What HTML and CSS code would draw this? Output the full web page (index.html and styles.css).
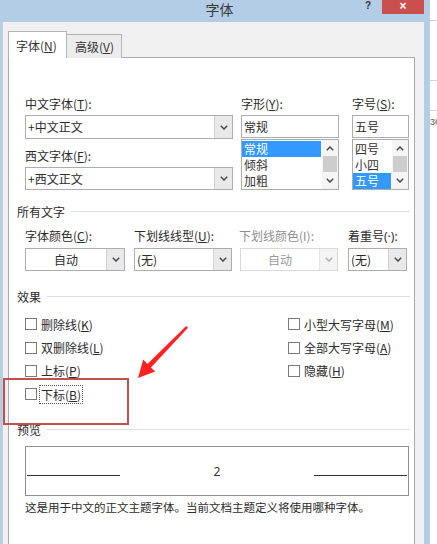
FILE: index.html
```html
<!DOCTYPE html>
<html lang="zh-CN">
<head>
<meta charset="utf-8">
<title>字体</title>
<link rel="stylesheet" href="styles.css">
</head>
<body>
<div class="screen">
  <div class="window">
    <div class="titlebar">
      <span class="title">字体</span>
      <span class="help">?</span>
      <span class="close">×</span>
    </div>
    <div class="client">
      <div class="tabs">
        <div class="tab active">字体(<u>N</u>)</div>
        <div class="tab">高级(<u>V</u>)</div>
      </div>
      <div class="panel">
        <div class="fonts">
          <div class="col col-main">
            <div class="lbl">中文字体(<u>T</u>):</div>
            <div class="combo tall"><span class="val">+中文正文</span><span class="btn"><svg width="8" height="5" viewBox="0 0 8 5"><polyline points="0.8,0.8 4,4 7.2,0.8" /></svg></span></div>
            <div class="lbl second">西文字体(<u>F</u>):</div>
            <div class="combo"><span class="val">+西文正文</span><span class="btn"><svg width="8" height="5" viewBox="0 0 8 5"><polyline points="0.8,0.8 4,4 7.2,0.8" /></svg></span></div>
          </div>
          <div class="col col-style">
            <div class="lbl">字形(<u>Y</u>):</div>
            <div class="edit">常规</div>
            <div class="listbox">
              <div class="items">
                <div class="item sel">常规</div>
                <div class="item">倾斜</div>
                <div class="item">加粗</div>
              </div>
              <div class="sb">
                <span class="sb-btn"><svg width="8" height="5" viewBox="0 0 8 5"><polyline points="0.8,4.2 4,1 7.2,4.2" /></svg></span>
                <span class="sb-thumb"></span>
                <span class="sb-btn"><svg width="8" height="5" viewBox="0 0 8 5"><polyline points="0.8,0.8 4,4 7.2,0.8" /></svg></span>
              </div>
            </div>
          </div>
          <div class="col col-size">
            <div class="lbl">字号(<u>S</u>):</div>
            <div class="edit">五号</div>
            <div class="listbox">
              <div class="items">
                <div class="item">四号</div>
                <div class="item">小四</div>
                <div class="item sel">五号</div>
              </div>
              <div class="sb">
                <span class="sb-btn"><svg width="8" height="5" viewBox="0 0 8 5"><polyline points="0.8,4.2 4,1 7.2,4.2" /></svg></span>
                <span class="sb-thumb"></span>
                <span class="sb-btn"><svg width="8" height="5" viewBox="0 0 8 5"><polyline points="0.8,0.8 4,4 7.2,0.8" /></svg></span>
              </div>
            </div>
          </div>
        </div>

        <div class="group g-all"><span>所有文字</span><i></i></div>

        <div class="attrs">
          <div class="field f-color">
            <div class="lbl">字体颜色(<u>C</u>):</div>
            <div class="combo"><span class="val center">自动</span><span class="btn"><svg width="8" height="5" viewBox="0 0 8 5"><polyline points="0.8,0.8 4,4 7.2,0.8" /></svg></span></div>
          </div>
          <div class="field f-line">
            <div class="lbl">下划线线型(<u>U</u>):</div>
            <div class="combo"><span class="val">(无)</span><span class="btn"><svg width="8" height="5" viewBox="0 0 8 5"><polyline points="0.8,0.8 4,4 7.2,0.8" /></svg></span></div>
          </div>
          <div class="field f-lcolor disabled">
            <div class="lbl">下划线颜色(I):</div>
            <div class="combo"><span class="val center">自动</span><span class="btn"><svg width="8" height="5" viewBox="0 0 8 5"><polyline points="0.8,0.8 4,4 7.2,0.8" /></svg></span></div>
          </div>
          <div class="field f-emph">
            <div class="lbl">着重号<span class="latin">(·):</span></div>
            <div class="combo"><span class="val">(无)</span><span class="btn"><svg width="8" height="5" viewBox="0 0 8 5"><polyline points="0.8,0.8 4,4 7.2,0.8" /></svg></span></div>
          </div>
        </div>

        <div class="group g-fx"><span>效果</span><i></i></div>

        <div class="effects">
          <div class="fx-col fx-left">
            <div class="chk"><span class="box"></span><span>删除线(<u>K</u>)</span></div>
            <div class="chk"><span class="box"></span><span>双删除线(<u>L</u>)</span></div>
            <div class="chk"><span class="box"></span><span>上标(<u>P</u>)</span></div>
            <div class="chk last"><span class="box"></span><span class="focus">下标(<u>B</u>)</span></div>
          </div>
          <div class="fx-col fx-right">
            <div class="chk"><span class="box"></span><span>小型大写字母(<u>M</u>)</span></div>
            <div class="chk"><span class="box"></span><span>全部大写字母(<u>A</u>)</span></div>
            <div class="chk"><span class="box"></span><span>隐藏(<u>H</u>)</span></div>
          </div>
        </div>

        <div class="group g-pv"><span>预览</span><i></i></div>

        <div class="preview">
          <span class="pline"></span>
          <span class="sample">2</span>
          <span class="pline"></span>
        </div>
        <div class="note">这是用于中文的正文主题字体。当前文档主题定义将使用哪种字体。</div>
      </div>
    </div>
  </div>
  <div class="behind">
    <i class="bl b1"></i>
    <i class="bl b2"></i>
    <i class="bl b3"></i>
    <span class="bnum">36</span>
  </div>
</div>

<div class="annot-box"></div>
<svg class="annot-arrow" width="437" height="544" viewBox="0 0 437 544">
  <polygon points="138,378 143.2,359.6 147.4,364 186.2,326 188,327.8 151,367.4 155.2,371.4" />
</svg>
</body>
</html>
```

FILE: styles.css
```css
* { box-sizing: border-box; }

html, body {
  margin: 0;
  padding: 0;
  width: 437px;
  height: 544px;
  overflow: hidden;
  background: #ffffff;
}

body {
  position: relative;
  font-family: "Noto Sans CJK SC", "Microsoft YaHei", "Noto Sans", sans-serif;
  font-size: 12px;
  color: #2b2b2b;
}

u { text-decoration: underline; text-underline-offset: 1px; }

.latin { font-family: "Noto Sans", "Liberation Sans", sans-serif; }

.screen {
  display: flex;
  width: 437px;
  height: 544px;
}

/* ---------- window frame ---------- */
.window {
  width: 430px;
  height: 544px;
  background: #b3cde7;
  display: flex;
  flex-direction: column;
  padding: 0 6px 0 2px;
}

.titlebar {
  height: 22px;
  flex: none;
  display: flex;
  align-items: flex-start;
  margin-right: -6px;
}

.title {
  flex: 1;
  text-align: center;
  padding-left: 72px;
  font-size: 14px;
  line-height: 19px;
  color: #3a3a3a;
}

.help {
  width: 10px;
  font-family: "Liberation Sans", Arial, sans-serif;
  font-weight: bold;
  font-size: 10px;
  line-height: 11px;
  color: #333;
  margin-right: 7px;
}

.close {
  width: 42px;
  height: 14px;
  margin-right: 6px;
  background: #c9504f;
  color: #fff;
  font-family: "Liberation Sans", Arial, sans-serif;
  font-weight: bold;
  font-size: 12px;
  line-height: 13px;
  text-align: center;
}

.client {
  flex: 1;
  background: #f0f0f0;
  border-left: 1px solid #c9cfd6;
  padding: 9px 9px 0 5px;
  display: flex;
  flex-direction: column;
  min-height: 0;
}

/* ---------- tabs ---------- */
.tabs {
  display: flex;
  align-items: flex-end;
  height: 27px;
  margin-bottom: -1px;
  position: relative;
  z-index: 1;
}

.tab {
  height: 24px;
  padding: 0 7px 0 8px;
  border: 1px solid #b4b4b4;
  border-bottom: none;
  background: #ececec;
  line-height: 23px;
  color: #333;
  margin-left: -1px;
  white-space: nowrap;
}

.tab.active {
  height: 27px;
  width: 59px;
  margin-left: 0;
  background: #ffffff;
  line-height: 27px;
  padding: 0 0 0 7px;
}

.panel {
  flex: 1;
  background: #ffffff;
  border: 1px solid #ababab;
  border-bottom: none;
  padding: 37px 4px 0 8px;
  display: flex;
  flex-direction: column;
}

.lbl {
  height: 17px;
  line-height: 17px;
  white-space: nowrap;
  color: #2b2b2b;
}

/* ---------- fonts row ---------- */
.fonts {
  display: flex;
  padding-left: 8px;
}

.col { display: flex; flex-direction: column; }
.col-main { width: 208px; }
.col-style { width: 98px; margin-left: 8px; }
.col-size { width: 57px; margin-left: 13px; }

.col .lbl { margin-bottom: 3px; }
.col .lbl.second { margin-top: 8px; }

.combo {
  height: 23px;
  display: flex;
  border: 1px solid #abadb3;
  background: #fff;
}
.combo.tall { height: 24px; }

.combo .val {
  flex: 1;
  padding-left: 2px;
  line-height: 21px;
  white-space: nowrap;
  overflow: hidden;
}
.combo .val.center { text-align: center; padding-left: 0; }

.combo .btn {
  width: 18px;
  border-left: 1px solid #d2d2d2;
  background: #e9e9e9;
  display: flex;
  align-items: center;
  justify-content: center;
}

svg polyline {
  fill: none;
  stroke: #4a4a4a;
  stroke-width: 1.5;
}

.edit {
  height: 23px;
  border: 1px solid #abadb3;
  padding-left: 2px;
  line-height: 21px;
}

.listbox {
  margin-top: 1px;
  height: 51px;
  border: 1px solid #abadb3;
  display: flex;
}

.items { flex: 1; padding-top: 1px; }

.item {
  height: 16px;
  line-height: 16px;
  padding-left: 2px;
  color: #333;
}
.item.sel {
  background: #3399ff;
  color: #fff;
  margin-right: 1px;
}

.sb {
  width: 16px;
  background: #f5f5f5;
  display: flex;
  flex-direction: column;
}
.sb-btn {
  height: 16px;
  display: flex;
  align-items: center;
  justify-content: center;
}
.sb-thumb {
  height: 16px;
  margin: 0 1px;
  background: #cdcdcd;
}

/* ---------- group separators ---------- */
.group {
  display: flex;
  align-items: center;
  height: 17px;
  line-height: 17px;
}
.group span { color: #2b2b2b; margin-right: 6px; }
.group i {
  flex: 1;
  height: 1px;
  background: #dedede;
}

.g-all { margin-top: 13px; }
.g-fx { margin-top: 17px; }
.g-pv { margin-top: 15px; }

/* ---------- attribute row ---------- */
.attrs {
  display: flex;
  padding-left: 8px;
  margin-top: 7px;
}
.field .lbl { margin-bottom: 4px; }
.f-color { width: 100px; }
.f-line { width: 98px; margin-left: 9px; }
.f-lcolor { width: 98px; margin-left: 7px; }
.f-lcolor .combo { margin-left: 1px; width: 98px; }
.f-emph { width: 59px; margin-left: 11px; }

.disabled .lbl { color: #8e8e8e; }
.disabled .combo { border-color: #d9d9d9; }
.disabled .val { color: #9a9a9a; }
.disabled .btn { background: #f4f4f4; border-left-color: #e4e4e4; }
.disabled svg polyline { stroke: #b0b0b0; }

/* ---------- effects ---------- */
.effects {
  display: flex;
  margin-top: 7px;
  padding-left: 8px;
}
.fx-left { width: 263px; }
.fx-col { display: flex; flex-direction: column; }

.chk {
  display: flex;
  align-items: center;
  height: 23px;
  white-space: nowrap;
}
.chk:first-child { height: 24px; }
.chk.last { height: 24px; }

.box {
  width: 12px;
  height: 12px;
  border: 1px solid #7a7a7a;
  background: #fff;
  margin-right: 4px;
  flex: none;
}

.focus {
  outline: 1px dotted #555;
  outline-offset: 0;
  padding: 0 1px;
  margin-left: -1px;
  line-height: 17px;
}

/* ---------- preview ---------- */
.preview {
  margin: 8px 0 0 8px;
  width: 384px;
  height: 50px;
  border: 1px solid #8f8f8f;
  display: flex;
  align-items: center;
  padding: 0 1px;
}
.pline {
  width: 93px;
  height: 1px;
  background: #333;
  margin-top: 9px;
}
.sample {
  flex: 1;
  text-align: center;
  font-family: "Noto Sans", sans-serif;
  font-size: 12px;
  color: #333;
}

.note {
  margin: 3px 0 0 8px;
  height: 17px;
  line-height: 17px;
  white-space: nowrap;
  font-size: 11.5px;
}

/* ---------- window behind ---------- */
.behind {
  flex: 1;
  background: #fff;
  display: flex;
  flex-direction: column;
  overflow: hidden;
}
.bl {
  display: block;
  height: 1px;
  background: #d4d4d4;
}
.b1 { margin-top: 20px; }
.b2 { margin-top: 59px; }
.b3 { margin-top: 29px; }
.bnum {
  margin-top: 6px;
  font-family: "Liberation Sans", sans-serif;
  font-size: 9px;
  line-height: 10px;
  color: #555;
  white-space: nowrap;
}

/* ---------- annotation overlay ---------- */
.annot-box {
  position: absolute;
  left: 3px;
  top: 378px;
  width: 126px;
  height: 47px;
  border: 2px solid #c0504f;
}

.annot-arrow {
  position: absolute;
  left: 0;
  top: 0;
  pointer-events: none;
}
.annot-arrow polygon { fill: #ff2222; }
```
